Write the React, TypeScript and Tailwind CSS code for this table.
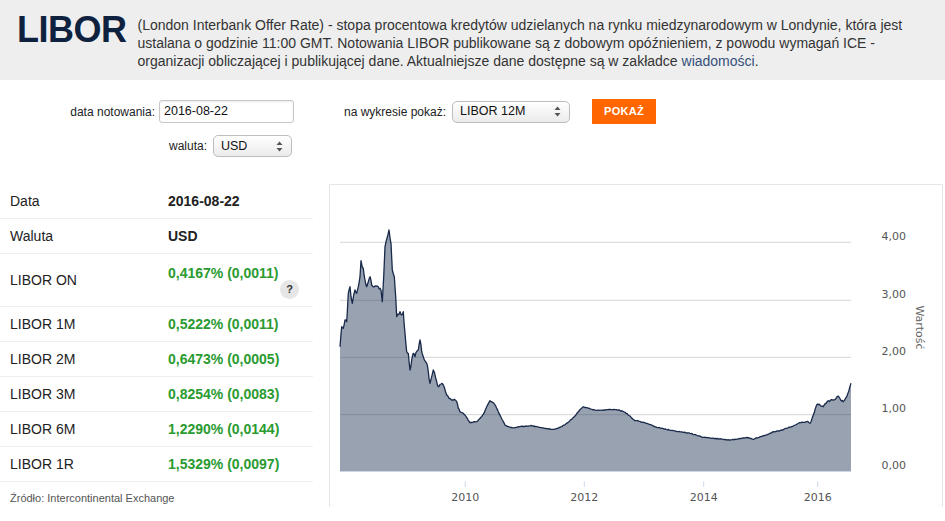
import React from "react";

const sans = { fontFamily: '"Liberation Sans", Arial, sans-serif' };

// traced points of the LIBOR 12M curve, in page pixels
const trace: [number, number][] = [
  [340, 346.7], [341.7, 326.7], [343.3, 328.3], [345, 320], [346.7, 321.7], [348.3, 293.3],
  [350, 286.7], [351, 296.7], [352.3, 303.3], [353.7, 295], [355, 290], [356.7, 293.3],
  [358.3, 286.7], [360, 276.7], [361, 260.7], [362.3, 267.3], [363.3, 268.3], [365, 280],
  [366.7, 286.7], [368.3, 281.7], [370, 276.7], [371.7, 285], [375, 286], [378.3, 286.7],
  [381, 290], [382.3, 301.7], [383.7, 276.7], [385, 246.7], [387, 238.3], [389, 230],
  [390.3, 240], [391, 243.3], [392.3, 270], [394.3, 276.7], [395.7, 296.7], [396.7, 316.7],
  [400, 311.7], [401.7, 315], [403.3, 311.7], [405, 333.3], [406.7, 351.7], [408.3, 353.3],
  [410, 370], [411.7, 360], [413.3, 353.3], [415, 356.7], [416.7, 351.7], [418.3, 350],
  [420, 340], [421.7, 351.7], [423.3, 356.7], [426.7, 363.3], [428.3, 371.7], [430, 383.3],
  [431.7, 376.7], [433.3, 370], [435.7, 378.3], [438.3, 386.7], [441, 384], [443.3, 385],
  [446.7, 395], [449, 398.3], [451.7, 400], [454.3, 399.3], [456.7, 401.7], [458.3, 408.3],
  [460, 411.7], [462.3, 412.7], [465, 415], [467.7, 419.3], [470, 422.7], [473.3, 422],
  [476.7, 421.7], [479, 419.3], [481.7, 416.7], [484.3, 412.7], [486.7, 406.7], [490, 400.7],
  [493.3, 402.7], [495.7, 406], [498.3, 411.7], [501, 417.3], [505, 425], [510, 427.3],
  [515, 427.7], [518.3, 426.7], [525, 426.3], [531.7, 425.7], [536.7, 426.7], [541.7, 427.7],
  [546.7, 428.7], [551.7, 429.3], [556.7, 428.7], [561.7, 426.7], [566.7, 423.3], [571.7, 419.3],
  [575, 416], [578.3, 411.7], [581, 408.7], [583.3, 406.7], [588.3, 408.3], [595, 410],
  [600, 410.3], [605, 410], [610, 409.3], [615, 409.7], [618.3, 410], [621.7, 411],
  [625, 412.3], [630, 416], [635, 420.7], [636.7, 420.7], [646.7, 423.3], [656.7, 427.3],
  [663.3, 428.7], [673.3, 430.7], [683.3, 432.3], [690, 433.3], [696.7, 435.3], [703.3, 437.3],
  [713.3, 438.3], [723.3, 439.3], [730, 440], [740, 438.7], [746.7, 437.3], [753.3, 439.3],
  [760, 436.7], [766.7, 435], [773.3, 431.7], [780, 430.7], [786.7, 428.3], [793.3, 426],
  [800, 422.7], [806.7, 421.7], [810, 423.3], [813.3, 415], [817.3, 404], [823.3, 406.7],
  [828.3, 400.7], [833.3, 400], [836, 398.3], [838.3, 396], [840.7, 400], [843.3, 401.7],
  [846.7, 396.7], [851, 383.3],
];

const noise = (x: number) => {
  const s = Math.sin(x * 12.9898) * 43758.5453;
  return (s - Math.floor(s) - 0.5) * 2;
};

const buildLine = () => {
  const out: string[] = [];
  for (let i = 0; i < trace.length - 1; i++) {
    const [x0, y0] = trace[i];
    const [x1, y1] = trace[i + 1];
    const steps = Math.max(1, Math.round(x1 - x0));
    for (let s = 0; s < steps; s++) {
      const t = s / steps;
      const x = x0 + (x1 - x0) * t;
      let y = y0 + (y1 - y0) * t;
      if (s > 0) {
        const amp = x < 460 ? 1.6 : x > 805 ? 1 : 0.35;
        y += amp * noise(x);
      }
      out.push(`${x.toFixed(1)},${y.toFixed(1)}`);
    }
  }
  out.push(`${trace[trace.length - 1][0]},${trace[trace.length - 1][1]}`);
  return out;
};

const linePts = buildLine();
const linePath = "M" + linePts.join(" L");
const areaPath = linePath + " L851,471 L340,471 Z";

const grid = [
  { y: 242.3, label: "4,00" },
  { y: 300.3, label: "3,00" },
  { y: 357.3, label: "2,00" },
  { y: 414.7, label: "1,00" },
  { y: 471, label: "0,00" },
];

const years = [
  { x: 465.3, label: "2010" },
  { x: 584.3, label: "2012" },
  { x: 703.7, label: "2014" },
  { x: 817.7, label: "2016" },
];

const rows = [
  { label: "LIBOR 1M", value: "0,5222% (0,0011)" },
  { label: "LIBOR 2M", value: "0,6473% (0,0005)" },
  { label: "LIBOR 3M", value: "0,8254% (0,0083)" },
  { label: "LIBOR 6M", value: "1,2290% (0,0144)" },
  { label: "LIBOR 1R", value: "1,5329% (0,0097)" },
];

const Arrows = () => (
  <svg width="7" height="11" viewBox="0 0 7 11" className="shrink-0">
    <path d="M3.5 0.5 L6.5 4 L0.5 4 Z" fill="#555" />
    <path d="M3.5 10.5 L6.5 7 L0.5 7 Z" fill="#555" />
  </svg>
);

const FakeSelect = ({ value, width }: { value: string; width: string }) => (
  <div
    className={`${width} h-[22px] flex items-center justify-between pl-[7px] pr-[8px] border border-[#bdbdbd] rounded-[5px] bg-gradient-to-b from-white to-[#ebebeb] text-[12.5px] text-[#111]`}
  >
    <span>{value}</span>
    <Arrows />
  </div>
);

const Chart = () => (
  <div className="relative ml-[16px] w-[614px] h-[323px] border-l border-t border-r border-[#e6e6e6]">
    <svg width="612" height="322" viewBox="330 185 612 322" className="block">
      {grid.slice(0, 4).map((g) => (
        <line key={g.y} x1="340" x2="851" y1={g.y} y2={g.y} stroke="#d6d6d6" strokeWidth="1" />
      ))}
      <path d={areaPath} fill="#1c3050" fillOpacity="0.45" />
      <path d={linePath} fill="none" stroke="#18294a" strokeWidth="1.3" strokeLinejoin="round" />
      <line x1="340" x2="851" y1="471.5" y2="471.5" stroke="#ccd6eb" strokeWidth="1" />
      {years.map((y) => (
        <g key={y.label}>
          <line x1={y.x} x2={y.x} y1="481.5" y2="487" stroke="#ccd6eb" strokeWidth="1" />
          <text
            x={y.x}
            y="501"
            textAnchor="middle"
            fontSize="11"
            fill="#555"
            fontFamily='"DejaVu Sans", Verdana, sans-serif'
          >
            {y.label}
          </text>
        </g>
      ))}
      {grid.map((g) => (
        <text
          key={g.label}
          x="881.5"
          y={g.y - 2.3}
          fontSize="11"
          fill="#555"
          fontFamily='"DejaVu Sans", Verdana, sans-serif'
        >
          {g.label}
        </text>
      ))}
      <text
        transform="translate(915.5,327.5) rotate(90)"
        textAnchor="middle"
        fontSize="11"
        fill="#666"
        fontFamily='"DejaVu Sans", Verdana, sans-serif'
      >
        Wartość
      </text>
    </svg>
  </div>
);

export default function App() {
  return (
    <div className="w-[945px] h-[521px] overflow-hidden bg-white text-[#333]" style={sans}>
      {/* Header */}
      <div className="h-[80px] bg-[#eeeeee] flex items-start">
        <div className="ml-[17px] mt-[12px] text-[36px] leading-none font-bold text-[#0e2240] tracking-[-0.5px]">
          LIBOR
        </div>
        <p className="ml-[11px] mt-[16px] text-[14px] leading-[18px] text-[#333] whitespace-nowrap">
          (London Interbank Offer Rate) - stopa procentowa kredytów udzielanych na rynku miedzynarodowym w Londynie, która jest
          <br />
          ustalana o godzinie 11:00 GMT. Notowania LIBOR publikowane są z dobowym opóźnieniem, z powodu wymagań ICE -
          <br />
          organizacji obliczającej i publikującej dane. Aktualniejsze dane dostępne są w zakładce{" "}
          <span className="text-[#34507a]">wiadomości</span>.
        </p>
      </div>

      {/* Form */}
      <div className="flex items-center h-[25px] mt-[19px] text-[12px] text-[#222]">
        <div className="w-[155px] text-right">data notowania:</div>
        <div className="ml-[4px] w-[135px] h-[23px] flex items-center pl-[4px] border border-[#c6c6c6] rounded-[3px] shadow-[inset_0_1px_2px_rgba(0,0,0,0.08)] text-[12.5px] text-[#111]">
          2016-08-22
        </div>
        <div className="ml-[50px]">na wykresie pokaż:</div>
        <div className="ml-[6px]">
          <FakeSelect value="LIBOR 12M" width="w-[118px]" />
        </div>
        <div className="ml-[22px] w-[64px] h-[25px] bg-[#ff6600] flex items-center justify-center text-white font-bold text-[11px] tracking-[0.3px]">
          POKAŻ
        </div>
      </div>
      <div className="flex items-center h-[22px] mt-[11px] text-[12px] text-[#222]">
        <div className="w-[207px] text-right">waluta:</div>
        <div className="ml-[6px]">
          <FakeSelect value="USD" width="w-[79px]" />
        </div>
      </div>

      {/* Main */}
      <div className="flex items-start mt-[27px]">
        <div className="w-[313px] text-[14px]">
          <div className="h-[35px] flex items-center border-b border-[#eeeeee]">
            <div className="w-[168px] pl-[10px] text-[#222]">Data</div>
            <div className="font-bold text-[#222]">2016-08-22</div>
          </div>
          <div className="h-[35px] flex items-center border-b border-[#eeeeee]">
            <div className="w-[168px] pl-[10px] text-[#222]">Waluta</div>
            <div className="font-bold text-[#222]">USD</div>
          </div>
          <div className="relative h-[53px] flex items-center border-b border-[#eeeeee]">
            <div className="w-[168px] pl-[10px] text-[#222]">LIBOR ON</div>
            <div className="self-start mt-[9px] font-bold text-[#2a9b30]">0,4167% (0,0011)</div>
            <div className="absolute right-[14px] top-[26px] w-[19px] h-[19px] rounded-full bg-[#e6e6e6] flex items-center justify-center text-[11px] font-bold text-[#333]">
              ?
            </div>
          </div>
          {rows.map((r) => (
            <div key={r.label} className="h-[35px] flex items-center border-b border-[#eeeeee]">
              <div className="w-[168px] pl-[10px] text-[#222]">{r.label}</div>
              <div className="font-bold text-[#2a9b30]">{r.value}</div>
            </div>
          ))}
          <div className="mt-[8px] pl-[10px] text-[11px] text-[#555]">Źródło: Intercontinental Exchange</div>
        </div>
        <Chart />
      </div>
    </div>
  );
}
